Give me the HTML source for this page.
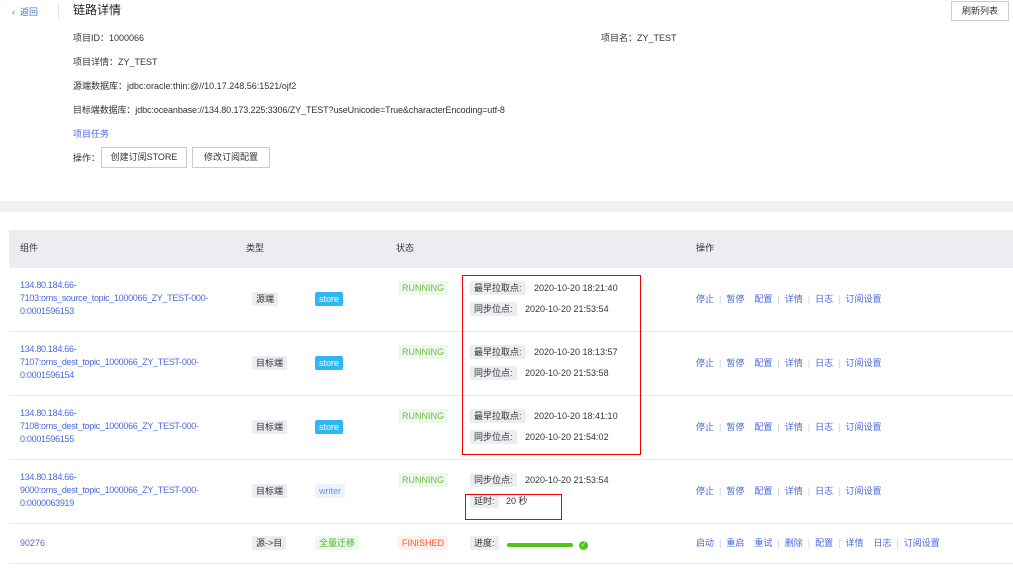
<!DOCTYPE html>
<html><head><meta charset="utf-8"><style>
*{margin:0;padding:0;box-sizing:border-box}
body{width:1013px;height:577px;background:#fff;position:relative;overflow:hidden;font-family:"Liberation Sans","Noto Sans CJK SC",sans-serif;font-size:9px;color:#333}
.a{position:absolute;white-space:nowrap;line-height:13px}
.l{color:#4a68dc}
.c{letter-spacing:-0.3px}
.tag{position:absolute;height:14px;line-height:14px;padding:0 4px;background:#ebedf0;color:#333;font-size:9px;border-radius:2px}
.btn{position:absolute;border:1px solid #c9ced6;background:#fff;text-align:center;line-height:18px;font-size:9px;color:#333}
.sep{position:absolute;left:9px;right:0;height:1px;background:#e8e9ec}
.ops span.s{color:#ccd;margin:0 5px}
.ops{color:#4a68dc}
.red{position:absolute;border:1px solid #e00}
</style></head><body>
<div class="a l" style="left:12px;top:6px">‹&nbsp; 返回</div>
<div style="position:absolute;left:58px;top:4px;width:1px;height:14px;background:#e3e3e3"></div>
<div class="a" style="left:73px;top:3px;font-size:12px;line-height:15px;color:#222">链路详情</div>
<div class="btn" style="left:951px;top:1px;width:58px;height:20px">刷新列表</div>
<div class="a" style="left:73px;top:32px">项目ID：1000066</div>
<div class="a" style="left:601px;top:32px">项目名：ZY_TEST</div>
<div class="a" style="left:73px;top:56px">项目详情：ZY_TEST</div>
<div class="a" style="left:73px;top:80px">源端数据库：jdbc:oracle:thin:@//10.17.248.56:1521/ojf2</div>
<div class="a" style="left:73px;top:104px;letter-spacing:-0.1px">目标端数据库：jdbc:oceanbase://134.80.173.225:3306/ZY_TEST?useUnicode=True&amp;characterEncoding=utf-8</div>
<div class="a l" style="left:73px;top:128px">项目任务</div>
<div class="a" style="left:73px;top:152px">操作：</div>
<div class="btn" style="left:101px;top:147px;width:86px;height:21px">创建订阅STORE</div>
<div class="btn" style="left:192px;top:147px;width:78px;height:21px">修改订阅配置</div>
<div style="position:absolute;left:0;right:0;top:201px;height:11px;background:#eef0f4"></div>
<div style="position:absolute;left:9px;right:0;top:230px;height:38px;background:#ebedf0"></div>
<div class="a" style="left:20px;top:242px">组件</div>
<div class="a" style="left:246px;top:242px">类型</div>
<div class="a" style="left:396px;top:242px">状态</div>
<div class="a" style="left:696px;top:242px">操作</div>

<div class="a l c" style="left:20px;top:279px">134.80.184.66-<br>7103:oms_source_topic_1000066_ZY_TEST-000-<br>0:0001596153</div>
<div class="tag" style="left:252px;top:292px">源端</div>
<div class="tag" style="left:315px;top:292px;background:#2db7f5;color:#fff">store</div>
<div class="tag" style="left:398px;top:281px;background:#edf8ee;color:#6cc24a">RUNNING</div>
<div class="tag" style="left:470px;top:281px">最早拉取点:</div><div class="a" style="left:534px;top:282px">2020-10-20 18:21:40</div>
<div class="tag" style="left:470px;top:302px">同步位点:</div><div class="a" style="left:525px;top:303px">2020-10-20 21:53:54</div>
<div class="a ops" style="left:696px;top:293px">停止<span class="s">|</span>暂停&nbsp;&nbsp;&nbsp;&nbsp;配置<span class="s">|</span>详情<span class="s">|</span>日志<span class="s">|</span>订阅设置</div>
<div class="sep" style="top:331px"></div>

<div class="a l c" style="left:20px;top:343px">134.80.184.66-<br>7107:oms_dest_topic_1000066_ZY_TEST-000-<br>0:0001596154</div>
<div class="tag" style="left:252px;top:356px">目标端</div>
<div class="tag" style="left:315px;top:356px;background:#2db7f5;color:#fff">store</div>
<div class="tag" style="left:398px;top:345px;background:#edf8ee;color:#6cc24a">RUNNING</div>
<div class="tag" style="left:470px;top:345px">最早拉取点:</div><div class="a" style="left:534px;top:346px">2020-10-20 18:13:57</div>
<div class="tag" style="left:470px;top:366px">同步位点:</div><div class="a" style="left:525px;top:367px">2020-10-20 21:53:58</div>
<div class="a ops" style="left:696px;top:357px">停止<span class="s">|</span>暂停&nbsp;&nbsp;&nbsp;&nbsp;配置<span class="s">|</span>详情<span class="s">|</span>日志<span class="s">|</span>订阅设置</div>
<div class="sep" style="top:395px"></div>

<div class="a l c" style="left:20px;top:407px">134.80.184.66-<br>7108:oms_dest_topic_1000066_ZY_TEST-000-<br>0:0001596155</div>
<div class="tag" style="left:252px;top:420px">目标端</div>
<div class="tag" style="left:315px;top:420px;background:#2db7f5;color:#fff">store</div>
<div class="tag" style="left:398px;top:409px;background:#edf8ee;color:#6cc24a">RUNNING</div>
<div class="tag" style="left:470px;top:409px">最早拉取点:</div><div class="a" style="left:534px;top:410px">2020-10-20 18:41:10</div>
<div class="tag" style="left:470px;top:430px">同步位点:</div><div class="a" style="left:525px;top:431px">2020-10-20 21:54:02</div>
<div class="a ops" style="left:696px;top:421px">停止<span class="s">|</span>暂停&nbsp;&nbsp;&nbsp;&nbsp;配置<span class="s">|</span>详情<span class="s">|</span>日志<span class="s">|</span>订阅设置</div>
<div class="sep" style="top:459px"></div>

<div class="a l c" style="left:20px;top:471px">134.80.184.66-<br>9000:oms_dest_topic_1000066_ZY_TEST-000-<br>0:0000063919</div>
<div class="tag" style="left:252px;top:484px">目标端</div>
<div class="tag" style="left:315px;top:484px;background:#e8f4ff;color:#7a8ae0">writer</div>
<div class="tag" style="left:398px;top:473px;background:#edf8ee;color:#6cc24a">RUNNING</div>
<div class="tag" style="left:470px;top:473px">同步位点:</div><div class="a" style="left:525px;top:474px">2020-10-20 21:53:54</div>
<div class="tag" style="left:470px;top:494px">延时:</div><div class="a" style="left:506px;top:495px">20 秒</div>
<div class="a ops" style="left:696px;top:485px">停止<span class="s">|</span>暂停&nbsp;&nbsp;&nbsp;&nbsp;配置<span class="s">|</span>详情<span class="s">|</span>日志<span class="s">|</span>订阅设置</div>
<div class="sep" style="top:523px"></div>

<div class="a l" style="left:20px;top:537px">90276</div>
<div class="tag" style="left:252px;top:536px">源-&gt;目</div>
<div class="tag" style="left:315px;top:536px;background:#edf8ee;color:#52b32a">全量迁移</div>
<div class="tag" style="left:398px;top:536px;background:#fff1e8;color:#f5553b">FINISHED</div>
<div class="tag" style="left:470px;top:536px">进度:</div>
<div style="position:absolute;left:507px;top:543px;width:66px;height:4px;border-radius:2px;background:#52c41a"></div>
<div style="position:absolute;left:579px;top:541px;width:9px;height:9px;border-radius:50%;background:#52c41a;color:#fff;font-size:6px;line-height:9px;text-align:center">✓</div>
<div class="a ops" style="left:696px;top:537px">启动<span class="s">|</span>重启&nbsp;&nbsp;&nbsp;&nbsp;重试<span class="s">|</span>删除<span class="s">|</span>配置<span class="s">|</span>详情&nbsp;&nbsp;&nbsp;&nbsp;日志<span class="s">|</span>订阅设置</div>
<div class="sep" style="top:563px"></div>

<div class="red" style="left:462px;top:275px;width:179px;height:180px"></div>
<div class="red" style="left:465px;top:494px;width:97px;height:26px"></div>
</body></html>
